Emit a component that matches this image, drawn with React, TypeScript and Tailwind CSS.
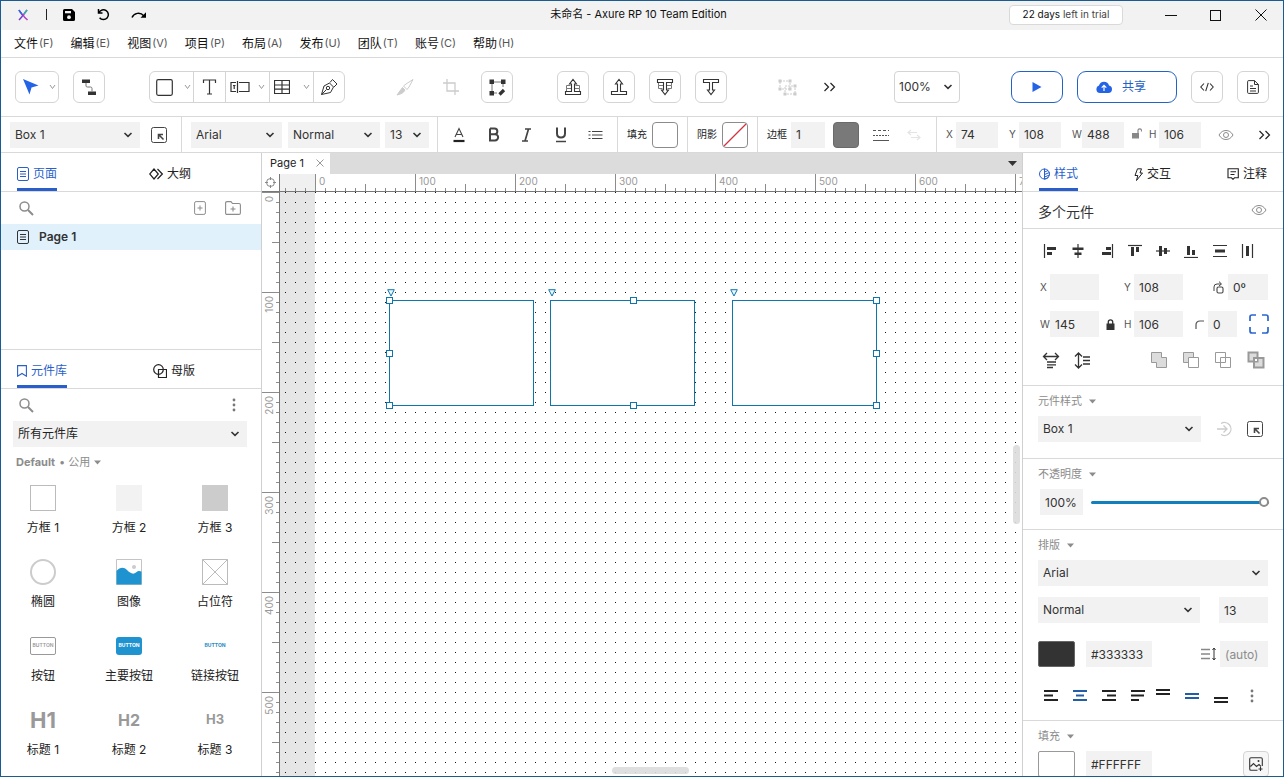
import React, { ReactNode } from "react";

const FIELD = "h-[26px] min-w-0 bg-[#f2f2f2] text-[12px] text-[#333] outline-none";
const BTN =
  "flex h-8 w-8 shrink-0 items-center justify-center rounded-md border border-[#d4d4d4] bg-white text-[#333]";

function Icon({ w = 16, h = 16, children, className = "" }: { w?: number; h?: number; children: ReactNode; className?: string }) {
  return (
    <svg
      width={w}
      height={h}
      viewBox={`0 0 ${w} ${h}`}
      fill="none"
      stroke="currentColor"
      strokeWidth="1"
      className={`block shrink-0 ${className}`}
      aria-hidden="true"
    >
      {children}
    </svg>
  );
}

function Chevron() {
  return (
    <Icon w={10} h={8}>
      <path d="M1.5 2 5 5.3 8.5 2" strokeWidth="1.6" />
    </Icon>
  );
}

function SmallChevron() {
  return (
    <Icon w={7} h={6} className="text-[#999]">
      <path d="M1 1 3.5 4.5 6 1" />
    </Icon>
  );
}

function DoubleChevron() {
  return (
    <Icon w={13} h={10} className="text-[#222]">
      <path d="M1.5 1 5.5 5 1.5 9M7.500 1 11.500 5 7.500 9" strokeWidth="1.2" />
    </Icon>
  );
}

function Select({ label, value, className = "", pad = "pl-[5px]" }: { label: string; value: string; className?: string; pad?: string }) {
  return (
    <div className={`relative ${className}`}>
      <select aria-label={label} defaultValue={value} className={`${FIELD} block w-full appearance-none ${pad}`}>
        <option>{value}</option>
      </select>
      <span className="pointer-events-none absolute inset-y-0 right-[7px] flex items-center text-[#333]">
        <Chevron />
      </span>
    </div>
  );
}

function Field({ label, value, className = "", pad = "pl-[5px]", shown }: { label: string; value: string; className?: string; pad?: string; shown?: ReactNode }) {
  return (
    <label className="flex items-center">
      {shown && <span className="w-[10px] shrink-0 text-[10px] text-[#555]">{shown}</span>}
      <input aria-label={label} defaultValue={value} className={`${FIELD} ${pad} ${className}`} />
    </label>
  );
}

function Eye() {
  return (
    <Icon w={16} h={12} className="text-[#8c8c8c]">
      <path d="M1 6C3 2.700 5.300 1.500 8 1.500S13 2.700 15 6C13 9.300 10.700 10.500 8 10.500S3 9.300 1 6Z" />
      <circle cx="8" cy="6" r="2.500" />
    </Icon>
  );
}

function BoxArrow() {
  return (
    <Icon w={16} h={16} className="text-[#444]">
      <rect x="0.5" y="0.5" width="15" height="15" rx="2" />
      <path d="M7.500 12V7.500H12M7.800 7.800 12.500 12.500" strokeWidth="1.6" />
    </Icon>
  );
}

function Magnifier() {
  return (
    <Icon w={16} h={16} className="text-[#8c8c8c]">
      <circle cx="6.500" cy="6.500" r="4.500" strokeWidth="1.5" />
      <path d="M10 10 15 15" strokeWidth="2" />
    </Icon>
  );
}

function PageIcon() {
  return (
    <Icon w={12} h={14}>
      <rect x="0.5" y="0.5" width="11" height="13" rx="1.500" />
      <path d="M3 4.500h6M3 7h6M3 9.500h6" />
    </Icon>
  );
}

function Dots() {
  return (
    <Icon w={4} h={16} className="text-[#777]">
      <g fill="currentColor" stroke="none">
        <circle cx="2" cy="3" r="1.400" />
        <circle cx="2" cy="8" r="1.400" />
        <circle cx="2" cy="13" r="1.400" />
      </g>
    </Icon>
  );
}

function Tab({ active, icon, children }: { active?: boolean; icon: ReactNode; children: ReactNode }) {
  return (
    <button
      className={
        active
          ? "flex h-[38px] items-center gap-1 border-b-[3px] border-[#2a5fcb] pt-[7px] text-[#2a5fcb]"
          : "flex h-[38px] items-center gap-1 border-b-[3px] border-transparent pt-[7px] text-[#222]"
      }
    >
      {icon}
      <span className="text-[12px]">{children}</span>
    </button>
  );
}

function TitleBar() {
  return (
    <header className="grid h-[29px] shrink-0 grid-cols-[1fr_auto_1fr] items-center bg-[#f2f2f2] pb-[2px]">
      <div className="flex items-center pl-4">
        <Icon w={12} h={12}>
          <path d="M2 1C3 3.500 5 5 5.500 6S3.500 9.500 2 11" stroke="#6f3fd0" strokeWidth="1.500" />
          <path d="M2 1C2.800 2.800 4 4 5 5" stroke="#2f67e0" strokeWidth="1.600" />
          <path d="M10 1C8.500 3 7 4.500 6.500 6S8.500 9 10.500 11" stroke="#b03ec0" strokeWidth="1.500" />
          <path d="M10 1C9 2.500 7.800 3.800 7 5" stroke="#2bb3a3" strokeWidth="1.600" />
        </Icon>
        <span className="ml-[17px] h-[11px] w-px bg-[#222]" />
        <button aria-label="Save" className="ml-4 text-black">
          <Icon w={12} h={12}>
            <path d="M1.500 0H9l3 3v7.500a1.500 1.500 0 0 1-1.500 1.500h-9A1.500 1.500 0 0 1 0 10.500v-9A1.500 1.500 0 0 1 1.500 0Z" fill="currentColor" stroke="none" />
            <path d="M2 2h6v2.300H2z" fill="#f2f2f2" stroke="none" />
            <circle cx="6" cy="8.200" r="1.900" fill="#f2f2f2" stroke="none" />
          </Icon>
        </button>
        <button aria-label="Undo" className="ml-[22px] text-black">
          <Icon w={13} h={13}>
            <path d="M1.500 1v4h4M2 4.700A4.900 4.900 0 1 1 2.600 9.700" strokeWidth="1.5" />
          </Icon>
        </button>
        <button aria-label="Redo" className="ml-[21px] text-black">
          <Icon w={16} h={13}>
            <path d="M1 9.500C3 5 9 3.500 13 8" strokeWidth="1.500" />
            <path d="M15 4.300V9.800H9.500Z" fill="currentColor" stroke="none" />
          </Icon>
        </button>
      </div>
      <h1 className="pr-[7px] text-[11px] text-[#111]">未命名 - Axure RP 10 Team Edition</h1>
      <div className="flex items-center justify-end pr-4">
        <button className="h-[20px] w-[114px] rounded border border-[#d9d9d9] bg-white text-[10px] text-[#444]">
          <span className="text-[#111]">22 days</span> left in trial
        </button>
        <button aria-label="Minimize" className="ml-[42px] text-[#111]">
          <Icon w={12} h={12}><path d="M0 6.500h12" /></Icon>
        </button>
        <button aria-label="Maximize" className="ml-[33px] text-[#111]">
          <Icon w={12} h={12}><rect x="0.5" y="1.500" width="10" height="10" /></Icon>
        </button>
        <button aria-label="Close" className="ml-[33px] text-[#111]">
          <Icon w={12} h={12}><path d="M0.500 0.500l11 11M11.500 0.500l-11 11" /></Icon>
        </button>
      </div>
    </header>
  );
}

const MENUS = [
  ["文件", "F"], ["编辑", "E"], ["视图", "V"], ["项目", "P"], ["布局", "A"],
  ["发布", "U"], ["团队", "T"], ["账号", "C"], ["帮助", "H"],
];

function MenuBar() {
  return (
    <nav className="flex h-[28px] shrink-0 items-center gap-[17px] border-b border-[#d9d9d9] pl-[13px] text-[12px] text-[#111]">
      {MENUS.map(([name, key]) => (
        <button key={key} className="flex items-center gap-px">
          {name}
          <span className="text-[11px] text-[#555]">({key})</span>
        </button>
      ))}
    </nav>
  );
}

function Arrange({ down, full }: { down?: boolean; full?: boolean }) {
  return (
    <Icon w={18} h={18}>
      <g transform={down ? "matrix(1 0 0 -1 0 18)" : undefined}>
        {full && <path d="M6.500 7.500H2.500V10.500H15.500V7.500H11.500M2.500 10.500V13.500M15.500 10.500V13.500" stroke="#777" />}
        <path d="M7.500 13.500V6H5.500L9 1.500 12.500 6H10.500V13.500H16.500V16.500H1.500V13.500Z" fill="white" strokeWidth="1.100" />
      </g>
    </Icon>
  );
}

function Toolbar() {
  const cell = "flex h-full items-center justify-center border-l border-[#d4d4d4]";
  return (
    <div className="flex h-[59px] shrink-0 items-center justify-between border-b border-[#d9d9d9] px-[14px]">
      <div className="flex items-center">
        <button aria-label="Select" className="flex h-8 w-[44px] items-center gap-[9px] rounded-md border border-[#d4d4d4] pl-[6px]">
          <Icon w={18} h={18}><path d="M1 1 16.500 7.500 9.500 9.500 7.500 16.500Z" fill="#2463e6" stroke="none" /></Icon>
          <SmallChevron />
        </button>
        <button aria-label="Connect" className={`${BTN} ml-[14px]`}>
          <Icon w={16} h={18}>
            <path d="M1 1.500h8v3.500H1zM7 13.500h8v3.500H7z" fill="currentColor" stroke="none" />
            <path d="M5 5v3q0 1 1.500 1h3q1.500 0 1.500 1.500v3" stroke="#777" />
          </Icon>
        </button>
        <div className="ml-[44px] flex h-8 items-center rounded-md border border-[#d4d4d4] text-[#333]">
          <button aria-label="Rectangle" className="flex h-full w-[43px] items-center gap-[11px] pl-[6px]">
            <Icon w={17} h={17}><rect x="0.700" y="0.700" width="15.600" height="15.600" rx="1.500" strokeWidth="1.200" /></Icon>
            <SmallChevron />
          </button>
          <button aria-label="Text" className={`${cell} w-8`}>
            <Icon w={15} h={16}><path d="M1.500 4V1h12v3M7.500 1v14M5 15h5" strokeWidth="1.200" /></Icon>
          </button>
          <button aria-label="Form controls" className={`${cell} w-[44px] gap-2`}>
            <Icon w={20} h={12}>
              <path d="M6 1.500H1v9h5M9 1.500h10v9H9M7.500 0v12M3 4.500h2.500M4.200 4.500v3.500" strokeWidth="1.200" />
            </Icon>
            <SmallChevron />
          </button>
          <button aria-label="Table" className={`${cell} w-[44px] gap-[13px]`}>
            <Icon w={16} h={14}><path d="M0.500 0.500h15v13h-15zM8 0.500v13M0.500 5h15M0.500 9.200h15" strokeWidth="1.200" /></Icon>
            <SmallChevron />
          </button>
          <button aria-label="Pen" className={`${cell} w-[31px]`}>
            <Icon w={18} h={18}>
              <path d="M1.500 16.500 4 8l5.500-3 4 4L10.500 14.500ZM10 4.500 12.500 1.500 17 6 14 9M1.500 16.500 6.500 11.500" />
              <circle cx="8" cy="10" r="1.700" />
            </Icon>
          </button>
        </div>
        <button disabled aria-label="Slice" className="ml-[44px] flex size-8 items-center justify-center text-[#ccc]">
          <Icon w={18} h={18}>
            <path d="M1 17C5 16 7.500 15 9 12L6.500 9.500Z" fill="currentColor" />
            <path d="M7.500 8 11 11.500 13 9 17 1.500 10 6Z" />
          </Icon>
        </button>
        <button disabled aria-label="Crop" className="ml-[14px] flex size-8 items-center justify-center text-[#ccc]">
          <Icon w={16} h={16}><path d="M4 0v12h12M0 4h12v12" strokeWidth="1.300" /></Icon>
        </button>
        <button aria-label="Edit points" className={`${BTN} ml-[14px]`}>
          <Icon w={17} h={17}>
            <path d="M3 3h11M3 3v11M14 3v5M3 14h5" stroke="#777" />
            <path d="M0.500 0.500h4.500v4.500H0.500zM12 0.500h4.500v4.500H12zM0.500 12h4.500v4.500H0.500z" fill="currentColor" stroke="none" />
            <path d="M10.500 15.500 15 11" strokeWidth="3.200" />
          </Icon>
        </button>
        <div className="ml-[44px] flex gap-[14px]">
          <button aria-label="Bring to front" className={BTN}><Arrange full /></button>
          <button aria-label="Bring forward" className={BTN}><Arrange /></button>
          <button aria-label="Send to back" className={BTN}><Arrange down full /></button>
          <button aria-label="Send backward" className={BTN}><Arrange down /></button>
        </div>
        <button disabled aria-label="Group" className="ml-[44px] flex size-8 items-center justify-center text-[#ccc]">
          <Icon w={19} h={17}>
            <path d="M2 2h10v8H2zM7 7h10v8H7z" strokeDasharray="2 1" />
            <path d="M0.500 0.500h3v3h-3zM10.500 0.500h3v3h-3zM0.500 8.500h3v3h-3zM15.500 5.500h3v3h-3zM5.500 13.500h3v3h-3zM15.500 13.500h3v3h-3zM10.500 8.500h3v3h-3z" fill="currentColor" stroke="none" />
          </Icon>
        </button>
        <button aria-label="More tools" className="ml-5"><DoubleChevron /></button>
      </div>
      <div className="flex items-center">
        <div className="relative w-[66px]">
          <select aria-label="Zoom" defaultValue="100%" className="block h-8 w-full appearance-none rounded border border-[#d4d4d4] bg-white pl-1 text-[12px] text-[#333] outline-none">
            <option>100%</option>
          </select>
          <span className="pointer-events-none absolute inset-y-0 right-[7px] flex items-center text-[#333]"><Chevron /></span>
        </div>
        <button aria-label="Preview" className="ml-[51px] flex h-8 w-[52px] items-center justify-center rounded-[9px] border border-[#2463c6]">
          <Icon w={10} h={10}><path d="M0.500 0 9.500 5 0.500 10Z" fill="#2463e6" stroke="none" /></Icon>
        </button>
        <button className="ml-[14px] flex h-8 w-[100px] items-center justify-center gap-[10px] rounded-[9px] border border-[#2463c6] pr-3 text-[12px] text-[#2463c6]">
          <Icon w={16} h={12}>
            <path d="M4 12A3.800 3.800 0 0 1 3 4.600 5.200 5.200 0 0 1 13 4.500 3.800 3.800 0 0 1 12.500 12Z" fill="#2463e6" stroke="none" />
            <path d="M8 10V4.500M5.700 6.700 8 4.400 10.300 6.700" stroke="white" strokeWidth="1.200" />
          </Icon>
          共享
        </button>
        <button aria-label="Code" className={`${BTN} ml-[14px]`}>
          <Icon w={14} h={10}><path d="M4 1.500.8 5 4 8.500M10 1.500 13.200 5 10 8.500M8.300.8 5.700 9.200" strokeWidth="1.100" /></Icon>
        </button>
        <button aria-label="Notes" className={`${BTN} ml-[14px]`}>
          <Icon w={12} h={14}>
            <path d="M1.500.600h6L11.400 4.500v7.900q0 1-1 1H1.600q-1 0-1-1V1.600q0-1 1-1ZM7.500.600V4.500H11.400M3 6h3M3 8.500h6M3 11h6" />
          </Icon>
        </button>
      </div>
    </div>
  );
}

function FormatBar() {
  const sep = "h-full w-px shrink-0 bg-[#d9d9d9]";
  return (
    <div className="flex h-[36px] shrink-0 items-center border-b border-[#d9d9d9]">
      <Select label="Widget style" value="Box 1" className="ml-[9px] w-[130px]" />
      <button aria-label="Update style" className="ml-[11px] mr-[14px]"><BoxArrow /></button>
      <div className={sep} />
      <Select label="Font" value="Arial" className="ml-[9px] w-[91px]" />
      <Select label="Weight" value="Normal" className="ml-[6px] w-[92px]" />
      <Select label="Size" value="13" className="ml-[5px] mr-2 w-[44px]" />
      <div className={sep} />
      <div className="flex w-[179px] shrink-0 items-center justify-between pl-[14px] pr-[14px] text-[#444]">
        <button aria-label="Text color">
          <Icon w={14} h={16}><path d="M3 10 7 1.500 11 10M4.300 7.500h5.400" strokeWidth="1.100" /><path d="M1.500 14h11" stroke="#222" strokeWidth="2.200" /></Icon>
        </button>
        <button aria-label="Bold">
          <Icon w={12} h={15}><path d="M2 1.500V13.500H7A3 3 0 0 0 7 7.200H2M2 1.500H6.500A2.700 2.700 0 0 1 6.500 7.200" strokeWidth="2" /></Icon>
        </button>
        <button aria-label="Italic">
          <Icon w={12} h={14}><path d="M4 1H10M1 13H7M7.500 1 4 13" strokeWidth="1.700" /></Icon>
        </button>
        <button aria-label="Underline">
          <Icon w={12} h={16}><path d="M2 0.500V6.500Q2 10.500 6 10.500T10 6.500V0.500" strokeWidth="2" /><path d="M1 14.500h10" strokeWidth="1.500" /></Icon>
        </button>
        <button aria-label="Bullets">
          <Icon w={15} h={10}><path d="M0.500 1.500h2M0.500 5h2M0.500 8.500h2M4 1.500h10.500M4 5h10.500M4 8.500h10.500" strokeWidth="1.200" /></Icon>
        </button>
      </div>
      <div className={sep} />
      <label className="flex w-[69px] shrink-0 items-center justify-between pl-[9px] pr-[9px] text-[10px] text-[#222]">
        填充
        <button aria-label="Fill" className="size-[26px] rounded-[4px] border border-[#8c8c8c] bg-white" />
      </label>
      <div className={sep} />
      <label className="flex w-[69px] shrink-0 items-center justify-between pl-[9px] pr-[9px] text-[10px] text-[#222]">
        阴影
        <button aria-label="Shadow" className="size-[26px] rounded-[4px] border border-[#8c8c8c] bg-white">
          <Icon w={24} h={24}><path d="M1 23 23 1" stroke="#d0343f" strokeWidth="1.200" /></Icon>
        </button>
      </label>
      <div className={sep} />
      <div className="flex w-[178px] shrink-0 items-center pl-[9px]">
        <label htmlFor="border-width" className="text-[10px] text-[#222]">边框</label>
        <input id="border-width" defaultValue="1" className={`${FIELD} ml-1 w-[34px] pl-[5px]`} />
        <button aria-label="Border color" className="ml-2 size-[26px] shrink-0 rounded-[4px] border border-[#6a6a6a] bg-[#797979]" />
        <button aria-label="Border style" className="ml-[14px] text-[#555]">
          <Icon w={16} h={12}><path d="M0 1.500h16" strokeDasharray="3 2" /><path d="M0 6.500h16" strokeDasharray="2 1" /><path d="M0 11.500h16" /></Icon>
        </button>
        <button disabled aria-label="Arrows" className="ml-[18px] text-[#e4e4e4]">
          <Icon w={14} h={12}><path d="M4 1 1 3.500 4 6M1 3.500h9M10 6l3 2.500L10 11M13 8.500H4" strokeWidth="1.200" /></Icon>
        </button>
      </div>
      <div className={sep} />
      <div className="flex min-w-0 flex-1 items-center gap-[11px] pl-[9px] pr-[12px]">
        <Field label="X" shown="X" value="74" className="w-[42px]" />
        <Field label="Y" shown="Y" value="108" className="w-[42px]" />
        <div className="flex items-center gap-[7px]">
          <Field label="W" shown="W" value="488" className="w-[42px]" />
          <button aria-label="Lock ratio" className="pb-1 text-[#888]">
            <Icon w={11} h={12}><path d="M1 6h7v5.500H1z" fill="currentColor" stroke="none" /><path d="M7 6V3a2 2 0 0 1 3.500 0v1.500" strokeWidth="1.200" /></Icon>
          </button>
          <Field label="H" shown="H" value="106" className="w-[42px]" />
        </div>
        <button aria-label="Visibility" className="ml-[6px]"><Eye /></button>
        <button aria-label="More formatting" className="ml-auto"><DoubleChevron /></button>
      </div>
    </div>
  );
}

function Thumb({ kind }: { kind: string }) {
  switch (kind) {
    case "box1":
      return <div className="size-[26px] border border-[#bbb] bg-white" />;
    case "box2":
      return <div className="size-[26px] bg-[#f2f2f2]" />;
    case "box3":
      return <div className="size-[26px] bg-[#ccc]" />;
    case "ellipse":
      return <div className="size-[26px] rounded-full border-2 border-[#ccc]" />;
    case "image":
      return (
        <Icon w={26} h={26}>
          <path d="M0.500 0.500h25v25h-25z" stroke="#c4c4c4" />
          <circle cx="18" cy="8" r="2" fill="#ccc" stroke="none" />
          <path d="M0.500 12C4 8 8 8 11 11S17 16 20 13.500 24 12.500 25.500 12.500V25.500H0.500Z" fill="#1f93d0" stroke="none" />
        </Icon>
      );
    case "placeholder":
      return <Icon w={26} h={26}><path d="M0.500 0.500h25v25h-25zM0.500.500l25 25M25.500.500l-25 25" stroke="#bbb" /></Icon>;
    case "button":
      return <div className="flex h-[18px] w-[26px] items-center justify-center rounded-[2px] border border-[#999] text-[5px] font-semibold text-[#999]">BUTTON</div>;
    case "primary":
      return <div className="flex h-[18px] w-[26px] items-center justify-center rounded-[3px] bg-[#1f93d0] text-[5px] font-bold text-white">BUTTON</div>;
    case "link":
      return <div className="text-[5px] font-bold text-[#1f8cc4]">BUTTON</div>;
    case "h1":
      return <div className="text-[22px] font-bold text-[#999]">H1</div>;
    case "h2":
      return <div className="text-[16px] font-bold text-[#999]">H2</div>;
    default:
      return <div className="text-[13px] font-bold text-[#999]">H3</div>;
  }
}

const WIDGETS = [
  ["box1", "方框 1"], ["box2", "方框 2"], ["box3", "方框 3"],
  ["ellipse", "椭圆"], ["image", "图像"], ["placeholder", "占位符"],
  ["button", "按钮"], ["primary", "主要按钮"], ["link", "链接按钮"],
  ["h1", "标题 1"], ["h2", "标题 2"], ["h3", "标题 3"],
];

function LeftPanel() {
  return (
    <aside className="flex w-[261px] shrink-0 flex-col border-r border-[#d0d0d0]">
      <div className="flex h-[39px] shrink-0 gap-[92px] border-b border-[#d9d9d9] pl-4">
        <Tab active icon={<PageIcon />}>页面</Tab>
        <Tab icon={<Icon w={14} h={12}><path d="M5 1 .700 6 5 11 9.300 6ZM8.500 1 13.300 6 8.500 11" strokeWidth="1.200" /></Icon>}>大纲</Tab>
      </div>
      <div className="flex h-8 shrink-0 items-center pl-[17px] pr-5">
        <Magnifier />
        <input aria-label="Search pages" className="min-w-0 flex-1 outline-none" />
        <button aria-label="Add page" className="text-[#8c8c8c]">
          <Icon w={12} h={14}><rect x="0.600" y="0.600" width="10.800" height="12.800" rx="1.500" /><path d="M6 4.500v5M3.500 7h5" /></Icon>
        </button>
        <button aria-label="Add folder" className="ml-[19px] text-[#8c8c8c]">
          <Icon w={16} h={14}><path d="M2 .600h4L7.500 2.500H14q1.400 0 1.400 1.400V12q0 1.400-1.400 1.400H2Q.600 13.400.600 12V2Q.600.600 2 .600ZM8 5.500v5M5.500 8h5" strokeWidth="1.100" /></Icon>
        </button>
      </div>
      <button className="flex h-[26px] shrink-0 items-center gap-[10px] bg-[#e0f1fc] pl-4 text-[12px] font-semibold text-[#333]">
        <PageIcon />
        Page 1
      </button>
      <div className="h-[99px] shrink-0" />
      <div className="flex h-10 shrink-0 gap-[86px] border-y border-[#d9d9d9] pl-4">
        <Tab active icon={<Icon w={10} h={12}><path d="M.600.600h8.800v10.600L5 8.500.600 11.200Z" strokeWidth="1.100" /></Icon>}>元件库</Tab>
        <Tab icon={<Icon w={14} h={14}><circle cx="5.500" cy="5.500" r="4.800" strokeWidth="1.200" /><path d="M5.500 5.500h8v8h-8z" strokeWidth="1.200" /></Icon>}>母版</Tab>
      </div>
      <div className="flex h-8 shrink-0 items-center pl-[17px] pr-[25px]">
        <Magnifier />
        <input aria-label="Search widgets" className="min-w-0 flex-1 outline-none" />
        <button aria-label="Library options"><Dots /></button>
      </div>
      <div className="relative ml-3 mr-[14px] shrink-0">
        <select aria-label="Library" defaultValue="所有元件库" className="block h-[26px] w-full appearance-none bg-[#f2f2f2] pl-[5px] text-[12px] text-[#222] outline-none">
          <option>所有元件库</option>
        </select>
        <span className="pointer-events-none absolute inset-y-0 right-[7px] flex items-center text-[#333]"><Chevron /></span>
      </div>
      <button className="mt-[5px] flex h-5 shrink-0 items-center gap-1 pl-[15px] text-[11px] text-[#8c8c8c]">
        <b className="font-bold">Default</b> • 公用
        <Icon w={7} h={5}><path d="M0 .500h7L3.500 4.500Z" fill="currentColor" stroke="none" /></Icon>
      </button>
      <div className="-ml-px mr-[3px] grid shrink-0 grid-cols-3 pt-[12px]">
        {WIDGETS.map(([kind, name]) => (
          <button key={kind} className="flex h-[74px] flex-col items-center">
            <span className="flex h-[28px] items-center justify-center">
              <Thumb kind={kind} />
            </span>
            <span className="mt-[7px] text-[12px] leading-[18px] text-[#222]">{name}</span>
          </button>
        ))}
      </div>
    </aside>
  );
}

const X_MAJORS = [0, 100, 200, 300, 400, 500, 600, 700];
const Y_MAJORS = [0, 100, 200, 300, 400, 500];

function HorizontalRuler() {
  return (
    <svg className="block h-[18px] min-w-0 flex-1 bg-white text-[#999]" aria-hidden="true" shapeRendering="crispEdges">
      <defs>
        <pattern id="ticks-x" x="35" width="100" height="18" patternUnits="userSpaceOnUse">
          <path d="M.500 0v18M50.500 10v8M10.500 14v4M20.500 14v4M30.500 14v4M40.500 14v4M60.500 14v4M70.500 14v4M80.500 14v4M90.500 14v4" stroke="#8c8c8c" />
        </pattern>
      </defs>
      <rect width="35" height="18" fill="#f0f0f0" />
      <rect width="100%" height="18" fill="url(#ticks-x)" />
      <path d="M0 17.500H3000" stroke="#777" />
      {X_MAJORS.map((n) => (
        <text key={n} x={n + 39} y="11" fontSize="10" fill="#999">{n}</text>
      ))}
    </svg>
  );
}

function VerticalRuler() {
  return (
    <svg className="block w-[18px] shrink-0 bg-white" aria-hidden="true" shapeRendering="crispEdges">
      <defs>
        <pattern id="ticks-y" width="18" height="100" patternUnits="userSpaceOnUse">
          <path d="M0 .500h18M10 50.500h8M14 10.500h4M14 20.500h4M14 30.500h4M14 40.500h4M14 60.500h4M14 70.500h4M14 80.500h4M14 90.500h4" stroke="#8c8c8c" />
        </pattern>
      </defs>
      <rect width="18" height="100%" fill="url(#ticks-y)" />
      <path d="M17.500 0V3000" stroke="#777" />
      {Y_MAJORS.map((n) => (
        <text key={n} transform={`translate(11 ${n + 4}) rotate(-90)`} textAnchor="end" fontSize="10" fill="#999">{n}</text>
      ))}
    </svg>
  );
}

const SHAPES = [
  { id: 1, place: "left-[109px] top-[108px]" },
  { id: 2, place: "left-[270px] top-[108px]" },
  { id: 3, place: "left-[452px] top-[108px]" },
];

const HANDLES = [
  "left-[106px] top-[105px]", "left-[106px] top-[158px]", "left-[106px] top-[210px]",
  "left-[350px] top-[105px]", "left-[350px] top-[210px]",
  "left-[593px] top-[105px]", "left-[593px] top-[158px]", "left-[593px] top-[210px]",
];

function Canvas() {
  return (
    <main className="flex min-w-0 flex-1 flex-col">
      <div className="flex h-[21px] shrink-0 items-center justify-between bg-[#dcdcdc] pr-[5px]">
        <button className="flex h-full items-center gap-[12px] bg-white pb-px pl-2 pr-[6px] text-[11px] text-[#222]">
          Page 1
          <Icon w={8} h={8} className="text-[#999]"><path d="M.500.500l7 7M7.500.500l-7 7" /></Icon>
        </button>
        <button aria-label="Open pages" className="text-[#333]">
          <Icon w={9} h={5}><path d="M0 0h9L4.500 5Z" fill="currentColor" stroke="none" /></Icon>
        </button>
      </div>
      <div className="flex shrink-0">
        <div className="flex h-[18px] w-[18px] items-center justify-center border-b border-r border-[#777] text-[#888]">
          <Icon w={11} h={11}><circle cx="5.500" cy="5.500" r="4" /><path d="M5.500 0v3M5.500 8v3M0 5.500h3M8 5.500h3" /></Icon>
        </div>
        <HorizontalRuler />
      </div>
      <div className="flex min-h-0 flex-1">
        <VerticalRuler />
        <div className="relative min-w-0 flex-1 overflow-hidden bg-white">
          <svg className="block h-full w-full" aria-hidden="true" shapeRendering="crispEdges">
            <defs>
              <pattern id="grid-dots" x="5" width="10" height="10" patternUnits="userSpaceOnUse">
                <rect width="1" height="1" fill="#111" />
              </pattern>
            </defs>
            <rect width="35" height="100%" fill="#e6e6e6" />
            <rect width="100%" height="100%" fill="url(#grid-dots)" />
          </svg>
          {SHAPES.map((s) => (
            <div key={s.id} className={`absolute h-[106px] w-[145px] border border-[#0f76ab] bg-white ${s.place}`}>
              <svg width="8" height="8" viewBox="0 0 8 8" className="absolute -left-[3px] -top-[12px]" aria-hidden="true">
                <path d="M.700.700h6.600L4 7Z" fill="#e8f8ff" stroke="#0f76ab" />
              </svg>
            </div>
          ))}
          {HANDLES.map((h) => (
            <span key={h} className={`absolute size-[7px] border border-[#0f76ab] bg-white ${h}`} />
          ))}
          <span className="absolute right-[2px] top-[253px] h-[79px] w-[7px] rounded-sm bg-[#dcdcdc]/90" />
          <span className="absolute bottom-[2px] left-[332px] h-[7px] w-[77px] rounded-sm bg-[#dcdcdc]/90" />
        </div>
      </div>
    </main>
  );
}

function SectionTitle({ children }: { children: ReactNode }) {
  return (
    <button className="flex h-[30px] items-center gap-[7px] text-[11px] text-[#8c8c8c]">
      {children}
      <Icon w={7} h={5}><path d="M0 .500h7L3.500 4.500Z" fill="currentColor" stroke="none" /></Icon>
    </button>
  );
}

const ALIGN = [
  { name: "Align left", line: "M1.500 0v14", bars: "M4 3h9v3H4zM4 8h5v3H4z" },
  { name: "Align center", line: "M7 0v14", bars: "M1.500 3.500h11v2.500h-11zM3.500 8.500h7v2.500h-7z" },
  { name: "Align right", line: "M12.500 0v14", bars: "M6 3h5v3H6zM2 8h9v3H2z" },
  { name: "Align top", line: "M0 1.500h14", bars: "M3 3h3v9H3zM8 3h3v5H8z" },
  { name: "Align middle", line: "M0 7h14", bars: "M3 2h3v10H3zM8 4h3v6H8z" },
  { name: "Align bottom", line: "M0 13.500h14", bars: "M3 2h3v9H3zM8 6h3v5H8z" },
  { name: "Distribute vertically", line: "M0 1.500h14M0 12.500h14", bars: "M2 5.500h10v3H2z" },
  { name: "Distribute horizontally", line: "M1.500 0v14M11.500 0v14", bars: "M5 2h3v10H5z" },
];

const TEXT_ALIGN = [
  { name: "Text left", d: "M0 2h14M0 6.500h9M0 11h14", on: false },
  { name: "Text center", d: "M0 2h14M3 6.500h8M0 11h14", on: true },
  { name: "Text right", d: "M0 2h14M5 6.500h9M0 11h14", on: false },
  { name: "Justify", d: "M0 2h14M0 6.500h13M0 11h8", on: false },
];

const TEXT_VALIGN = [
  { name: "Text top", d: "M0 1h14M0 5h14", on: false },
  { name: "Text middle", d: "M0 5h14M0 9h14", on: true },
  { name: "Text bottom", d: "M0 9h14M0 13h14", on: false },
];

function LineButton({ name, d, on }: { name: string; d: string; on: boolean }) {
  return (
    <button aria-label={name} className={on ? "text-[#225ea8]" : "text-[#222]"}>
      <Icon w={14} h={14}><path d={d} strokeWidth="1.800" /></Icon>
    </button>
  );
}

function RightPanel() {
  return (
    <aside className="flex w-[261px] shrink-0 flex-col overflow-hidden border-l border-[#d0d0d0]">
      <div className="flex h-[39px] shrink-0 justify-between border-b border-[#d9d9d9] pl-4 pr-4">
        <Tab active icon={<Icon w={11} h={12}><circle cx="5.500" cy="6" r="5" /><path d="M5.500.500v11M5.500 4l3.500-1.500M5.500 6.500l5-2M5.500 9l5-2M6 11l3.500-1.500" /></Icon>}>样式</Tab>
        <Tab icon={<Icon w={9} h={13}><path d="M3.500.800h4L6 5h2.500L2.500 12.500 3.800 7.500H1Z" /></Icon>}>交互</Tab>
        <Tab icon={<Icon w={12} h={12}><path d="M1 .800h10.300v9H7.500L6 11.300 4.500 9.800H1ZM3.500 3.800h5.500M3.500 6.500h4" strokeWidth="1.100" /></Icon>}>注释</Tab>
      </div>
      <div className="flex h-[37px] shrink-0 items-center justify-between border-b border-[#d9d9d9] pl-[15px] pr-4 pt-[2px] text-[14px] text-[#333]">
        多个元件
        <button aria-label="Toggle visibility" className="pb-[3px]"><Eye /></button>
      </div>
      <section className="h-[157px] shrink-0 border-b border-[#d9d9d9] pl-[17px] pr-[14px] pt-[15px]">
        <div className="flex justify-between pl-[3px] pr-[14px] text-[#333]">
          {ALIGN.map((a) => (
            <button key={a.name} aria-label={a.name}>
              <Icon w={14} h={14}>
                <path d={a.line} strokeWidth="1.200" />
                <path d={a.bars} fill="currentColor" stroke="none" />
              </Icon>
            </button>
          ))}
        </div>
        <div className="mt-4 flex items-center">
          <Field label="Widget X" shown="X" value="" className="w-[49px]" />
          <div className="ml-[25px]"><Field label="Widget Y" shown="Y" value="108" className="w-[49px]" /></div>
          <Icon w={11} h={13} className="ml-[30px] mr-1 text-[#444]">
            <rect x="4" y="6" width="6" height="6" rx="1.500" strokeWidth="1.100" />
            <path d="M1 10V6q0-3 3-3h4M6 .600 8.500 3 6 5" />
          </Icon>
          <Field label="Rotation" value="0º" className="w-[40px]" />
        </div>
        <div className="mt-[11px] flex items-center">
          <Field label="Widget W" shown="W" value="145" className="w-[49px]" />
          <Icon w={9} h={11} className="mx-[7px] text-[#333]">
            <path d="M.500 4.500h8V11h-8z" fill="currentColor" stroke="none" />
            <path d="M2.300 5V3a2.200 2.200 0 0 1 4.400 0v2" strokeWidth="1.300" />
          </Icon>
          <div className="ml-[2px]"><Field label="Widget H" shown="H" value="106" className="w-[49px]" /></div>
          <Icon w={9} h={9} className="ml-3 mr-1 text-[#555]"><path d="M1 9V5q0-4 4-4h4" strokeWidth="1.200" /></Icon>
          <Field label="Radius" value="0" className="w-[29px]" />
          <button aria-label="Corners" className="ml-auto text-[#2a66d0]">
            <Icon w={20} h={20}>
              <path d="M1 7V3q0-2 2-2h4M13 1h4q2 0 2 2v4M19 13v4q0 2-2 2h-4M7 19H3q-2 0-2-2v-4" strokeWidth="1.700" />
            </Icon>
          </button>
        </div>
        <div className="mt-[14px] flex items-center pl-[2px] pr-1 text-[#333]">
          <button aria-label="Fit width">
            <Icon w={18} h={17}><path d="M1.500 4.500h15M5 1 1.500 4.500 5 8M13 1l3.500 3.500L13 8M5 10h9M5 12.800h9M5 15.500h6" strokeWidth="1.300" /></Icon>
          </button>
          <button aria-label="Fit height" className="ml-[14px]">
            <Icon w={17} h={17}><path d="M4.500 1v15M1 4.500 4.500 1 8 4.500M1 12.500 4.500 16 8 12.500M9 5h7M9 8.500h7M9 12h7" strokeWidth="1.300" /></Icon>
          </button>
          <div className="ml-auto flex items-center gap-[16px] text-[#999]">
            <button aria-label="Union"><Icon w={16} h={16}><path d="M.500.500h10v5h5v10h-10v-5h-5Z" fill="#dcdcdc" /></Icon></button>
            <button aria-label="Subtract"><Icon w={16} h={16}><path d="M.500.500h10v10H.500Z" fill="#dcdcdc" /><path d="M5.500 5.500h10v10h-10Z" fill="white" /></Icon></button>
            <button aria-label="Intersect"><Icon w={16} h={16}><path d="M.500.500h10v10H.500ZM5.500 5.500h10v10h-10Z" /></Icon></button>
            <button aria-label="Exclude"><Icon w={18} h={18}><path d="M1.500 1.500h9v9h-9ZM7 7h9.500v9.500H7Z" fill="#dcdcdc" strokeWidth="2" /><path d="M8 8h2v2H8z" fill="white" stroke="none" /></Icon></button>
          </div>
        </div>
      </section>
      <section className="h-[73px] shrink-0 border-b border-[#d9d9d9] pl-[15px] pr-5">
        <SectionTitle>元件样式</SectionTitle>
        <div className="flex items-center justify-between">
          <Select label="Style" value="Box 1" className="w-[163px]" />
          <button disabled aria-label="Apply style" className="text-[#ccc]">
            <Icon w={15} h={16}><path d="M4 2.500A6.500 6.500 0 1 1 4 13.500M0 8h9.500M6.500 4.500 10 8l-3.500 3.500" strokeWidth="1.300" /></Icon>
          </button>
          <button aria-label="Manage styles"><BoxArrow /></button>
        </div>
      </section>
      <section className="h-[71px] shrink-0 border-b border-[#d9d9d9] pl-[15px] pr-[14px]">
        <SectionTitle>不透明度</SectionTitle>
        <div className="flex items-center gap-2 pl-[2px]">
          <Field label="Opacity" value="100%" className="w-[43px]" />
          <input
            type="range"
            aria-label="Opacity slider"
            defaultValue={100}
            className="mt-px h-4 min-w-0 flex-1 appearance-none bg-transparent [&::-webkit-slider-runnable-track]:h-[3px] [&::-webkit-slider-runnable-track]:rounded-full [&::-webkit-slider-runnable-track]:bg-[#1380be] [&::-webkit-slider-thumb]:-mt-[4px] [&::-webkit-slider-thumb]:size-[10px] [&::-webkit-slider-thumb]:appearance-none [&::-webkit-slider-thumb]:rounded-full [&::-webkit-slider-thumb]:border-2 [&::-webkit-slider-thumb]:border-[#8c8c8c] [&::-webkit-slider-thumb]:bg-white"
          />
        </div>
      </section>
      <section className="h-[191px] shrink-0 border-b border-[#d9d9d9] pl-[15px] pr-[15px]">
        <SectionTitle>排版</SectionTitle>
        <Select label="Typeface" value="Arial" />
        <div className="mt-[11px] flex justify-between">
          <Select label="Font weight" value="Normal" className="w-[162px]" />
          <Field label="Font size" value="13" className="w-[49px]" />
        </div>
        <div className="mt-[18px] flex items-center">
          <button aria-label="Font color" className="h-[26px] w-[37px] rounded-[2px] border border-[#666] bg-[#333]" />
          <div className="ml-[11px]"><Field label="Font color value" value="#333333" className="w-[66px]" /></div>
          <Icon w={15} h={14} className="ml-auto mr-1 text-[#555]">
            <path d="M0 2.500h9M0 7h9M0 11.500h9" stroke="#888" strokeWidth="1.400" />
            <path d="M13 1.500v11M11.500 3 13 1l1.500 2M11.500 11l1.500 2 1.500-2" stroke="#333" />
          </Icon>
          <label><input aria-label="Line spacing" placeholder="(auto)" className={`${FIELD} block w-[48px] pl-[5px] placeholder:text-[#8c8c8c]`} /></label>
        </div>
        <div className="mt-[21px] flex items-center justify-between pl-[6px] pr-[14px]">
          <div className="flex gap-[15px]">
            {TEXT_ALIGN.map((t) => <LineButton key={t.name} {...t} />)}
          </div>
          <div className="flex gap-[15px]">
            {TEXT_VALIGN.map((t) => <LineButton key={t.name} {...t} />)}
          </div>
          <button aria-label="More text options" className="ml-3"><Dots /></button>
        </div>
      </section>
      <section className="shrink-0 pl-[15px] pr-[14px]">
        <SectionTitle>填充</SectionTitle>
        <div className="flex items-center">
          <button aria-label="Fill color" className="h-[26px] w-[37px] rounded-[2px] border border-[#999] bg-white" />
          <div className="ml-[11px]"><Field label="Fill color value" value="#FFFFFF" className="w-[66px]" /></div>
          <button aria-label="Fill image" className="ml-auto flex size-[26px] items-center justify-center rounded border border-[#d4d4d4] bg-[#f7f7f7] text-[#333]">
            <Icon w={14} h={14}>
              <path d="M8.500 13.300H2Q.700 13.300.700 12V2Q.700.700 2 .700H12Q13.300.700 13.300 2V9M1.500 9.500l3-3 3 3 2.500-2 2 2M11.500 10v4M9.500 12h4" strokeWidth="1.100" />
              <circle cx="9.500" cy="4" r="1" fill="currentColor" stroke="none" />
            </Icon>
          </button>
        </div>
      </section>
    </aside>
  );
}

export default function App() {
  return (
    <div className="flex h-screen flex-col overflow-hidden border border-[#1a5c91] bg-white font-['Inter','Noto_Sans_CJK_SC',sans-serif]">
      <TitleBar />
      <MenuBar />
      <Toolbar />
      <FormatBar />
      <div className="flex min-h-0 flex-1">
        <LeftPanel />
        <Canvas />
        <RightPanel />
      </div>
    </div>
  );
}
